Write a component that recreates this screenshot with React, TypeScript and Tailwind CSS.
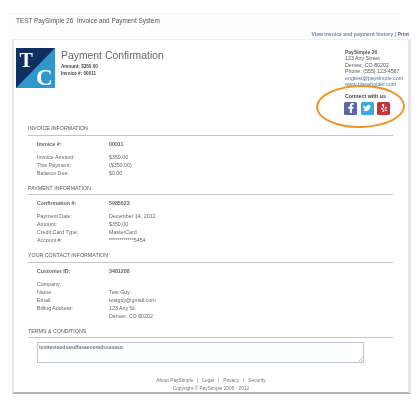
import { FaFacebookF, FaTwitter, FaYelp } from 'react-icons/fa'

type Row = { label: string; value?: string; bold?: boolean; gap?: boolean }

const invoiceRows: Row[] = [
  { label: 'Invoice #:', value: '00011', bold: true },
  { label: 'Invoice Amount:', value: '$350.00', gap: true },
  { label: 'This Payment:', value: '($350.00)' },
  { label: 'Balance Due:', value: '$0.00' },
]

const paymentRows: Row[] = [
  { label: 'Confirmation #:', value: '5985623', bold: true },
  { label: 'Payment Date:', value: 'December 14, 2012', gap: true },
  { label: 'Amount:', value: '$350.00' },
  { label: 'Credit Card Type:', value: 'MasterCard' },
  { label: 'Account #:', value: '************5454' },
]

const contactRows: Row[] = [
  { label: 'Customer ID:', value: '3481208', bold: true },
  { label: 'Company:', gap: true },
  { label: 'Name:', value: 'Test Guy' },
  { label: 'Email:', value: 'testguy@gmail.com' },
  { label: 'Billing Address:', value: '123 Any St.' },
  { label: '', value: 'Denver, CO 80202' },
]

function Section({ title, rows }: { title: string; rows: Row[] }) {
  return (
    <section className="mb-[6px]">
      <h2 className="border-b border-[#c4c4c4] pb-[1.5px] text-[5.3px] leading-[10px] text-[#555]">{title}</h2>
      <div className="pt-[4px] pl-[9px] text-[5.3px] text-[#666]">
        {rows.map((row, i) => (
          <div
            key={i}
            className={`grid h-[8px] grid-cols-[72px_1fr] items-center leading-[8px] ${row.gap ? 'mt-[5px]' : ''} ${row.bold ? 'font-bold' : ''}`}
          >
            <span>{row.label}</span>
            <span>{row.value}</span>
          </div>
        ))}
      </div>
    </section>
  )
}

function Logo() {
  return (
    <svg width="39" height="40" viewBox="0 0 39 40" className="shrink-0">
      <rect width="39" height="40" fill="#2f97cc" />
      <path d="M0 0H39L0 40Z" fill="#0e2f5f" />
      <text x="3.5" y="19" fontFamily="'Liberation Serif', serif" fontWeight="700" fontSize="20" fill="#fff">T</text>
      <text x="20" y="36.5" fontFamily="'Liberation Serif', serif" fontWeight="700" fontSize="23" fill="#fff">C</text>
    </svg>
  )
}

export default function App() {
  return (
    <div className="relative h-[408px] w-[418px] overflow-hidden bg-white font-['Liberation_Sans',Arial,sans-serif] blur-[0.45px]">
      <div className="mt-[13px] ml-[8px] h-[27px] w-[392px] border-t border-[#f3f3f3] bg-[#fdfdfd]">
        <p className="pt-[2px] pl-[8px] text-[6.4px] leading-[9px] text-[#555]">
          TEST PaySimple 26&nbsp; Invoice and Payment System
        </p>
      </div>

      <div className="-mt-[10px] flex justify-end pr-[9px] text-[5.1px] leading-[8px] font-bold text-[#6b88b2]">
        <span>View invoice and payment history | <span className="text-[#4a6a9c]">Print</span></span>
      </div>

      <main className="mt-[1px] ml-[12px] h-[355px] w-[399px] border-t border-r-[3px] border-b-[2px] border-l-[2px] border-t-[#eeeeee] border-r-[#e6e6e6] border-b-[#b4b4b4] border-l-[#e6e6e6] bg-white shadow-[-4px_0_0_#fbfbfb]">
        <header className="flex h-[83px] px-[2px] pt-[8px]">
          <Logo />
          <div className="ml-[6px] flex-1">
            <h1 className="text-[10.4px] leading-[15px] text-[#666]">Payment Confirmation</h1>
            <p className="mt-[1px] text-[4.6px] leading-[6.5px] font-bold text-[#444]">Amount: $350.00</p>
            <p className="text-[4.6px] leading-[6.5px] font-bold text-[#444]">Invoice #: 00011</p>
          </div>
          <div className="w-[62px] pt-[1px] text-[5.3px] leading-[6.4px] text-[#555]">
            <p className="pl-[1px] text-[5px] font-bold">PaySimple 26</p>
            <p className="pl-[1px]">123 Any Street</p>
            <p className="pl-[1px]">Denver, CO 80202</p>
            <p className="pl-[1px]">Phone: (555) 123-4567</p>
            <p className="pl-[1px] text-[#4f70a6]">engtest@paysimple.com</p>
            <p className="pl-[1px] text-[#4f70a6]">www.placeholder.com</p>
            <p className="mt-[6px] pl-[1px] font-bold text-[#444]">Connect with us</p>
            <div className="mt-[2px] flex gap-[3.5px]">
              <span className="flex h-[13px] w-[13px] items-center justify-center rounded-[1.5px] bg-[#5b65a9] text-[10px] text-white"><FaFacebookF /></span>
              <span className="flex h-[13px] w-[13px] items-center justify-center rounded-[1.5px] bg-[#3ea9dc] text-[8px] text-white"><FaTwitter /></span>
              <span className="flex h-[13px] w-[13px] items-center justify-center rounded-[1.5px] bg-[#c8323c] text-[8px] text-white"><FaYelp /></span>
            </div>
          </div>
        </header>

        <div className="ml-[14px] w-[365px]">
          <Section title="INVOICE INFORMATION" rows={invoiceRows} />
          <Section title="PAYMENT INFORMATION" rows={paymentRows} />
          <Section title="YOUR CONTACT INFORMATION" rows={contactRows} />
          <h2 className="border-b border-[#c4c4c4] pb-[1.5px] text-[5.3px] leading-[10px] text-[#555]">TERMS &amp; CONDITIONS</h2>
          <div className="relative mt-[4px] ml-[9px] h-[21px] w-[327px] border border-[#b9c6d2] px-[1px] text-[5px] leading-[8px] font-bold text-[#777]">
            testtestasdsasdfasaeoeradssasasa
            <svg width="5" height="5" viewBox="0 0 5 5" className="absolute right-0 bottom-0">
              <path d="M0 5L5 0M2.5 5L5 2.5" stroke="#999" strokeWidth="0.6" />
            </svg>
          </div>
        </div>

        <footer className="mt-[14px] text-center text-[4.8px] leading-[8px] text-[#777]">
          <p>About PaySimple &nbsp;&nbsp;|&nbsp;&nbsp; Legal &nbsp;&nbsp;|&nbsp;&nbsp; Privacy &nbsp;&nbsp;|&nbsp;&nbsp; Security</p>
          <p>Copyright © PaySimple 2005 - 2012</p>
        </footer>
      </main>

      <div className="absolute top-[85px] left-[316px] h-[43px] w-[89px] rotate-[-1deg] rounded-[50%] border-2 border-[#f0961e]" />
    </div>
  )
}
